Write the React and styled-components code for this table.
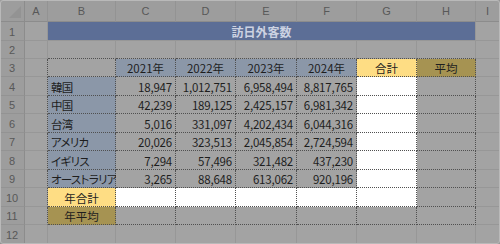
import styled, { createGlobalStyle } from 'styled-components';

const GlobalStyle = createGlobalStyle`
  html, body {
    margin: 0;
    padding: 0;
    background: #a3a3a3;
  }
  body {
    width: 500px;
    height: 244px;
    overflow: hidden;
    font-family: "Noto Sans CJK JP", "Liberation Sans", sans-serif;
    font-feature-settings: "palt";
  }
`;

const COLS = ['A', 'B', 'C', 'D', 'E', 'F', 'G', 'H', 'I'];
const ROW_H = [19, 18, 18, 19, 18, 19, 18, 19, 18, 19, 18, 19];

const FILL = {
  plain: '#a3a3a3',
  white: '#ffffff',
  title: '#5c6e96',
  head: '#8b97a8',
  yellow: '#fedd84',
  gold: '#a69352',
};

const YEARS = ['2021年', '2022年', '2023年', '2024年'];

const DATA = [
  ['韓国', '18,947', '1,012,751', '6,958,494', '8,817,765'],
  ['中国', '42,239', '189,125', '2,425,157', '6,981,342'],
  ['台湾', '5,016', '331,097', '4,202,434', '6,044,316'],
  ['アメリカ', '20,026', '323,513', '2,045,854', '2,724,594'],
  ['イギリス', '7,294', '57,496', '321,482', '437,230'],
  ['オーストラリア', '3,265', '88,648', '613,062', '920,196'],
];

const Frame = styled.div`
  position: relative;
  width: 500px;
  height: 244px;

  &::after {
    content: '';
    position: absolute;
    inset: 0;
    border: 1px solid #b9b9b9;
    border-radius: 3px;
    pointer-events: none;
  }
`;

const Sheet = styled.div`
  display: grid;
  grid-template-columns: 25px 23px 68px 60px 60px 61px 60px 60px 59px 24px;
  grid-template-rows: 22px ${ROW_H.map((h) => `${h}px`).join(' ')};
  width: 500px;
  height: 244px;
  background: ${FILL.plain};
  overflow: hidden;
`;

const Corner = styled.div`
  position: relative;
  background: #9d9d9d;
  border-right: 1px solid #8c8c8c;
  border-bottom: 1px solid #8c8c8c;
  box-sizing: border-box;

  &::after {
    content: '';
    position: absolute;
    right: 3px;
    bottom: 3px;
    width: 0;
    height: 0;
    border-left: 12px solid transparent;
    border-bottom: 12px solid #939393;
  }
`;

const ColHead = styled.div`
  display: flex;
  align-items: center;
  justify-content: center;
  padding-top: 1px;
  box-sizing: border-box;
  background: #9d9d9d;
  border-right: 1px solid #939393;
  border-bottom: 1px solid #8c8c8c;
  color: #585858;
  font-family: "Liberation Sans", sans-serif;
  font-size: 11px;
`;

const RowHead = styled.div`
  display: flex;
  align-items: center;
  justify-content: center;
  padding-top: 1px;
  box-sizing: border-box;
  background: #9d9d9d;
  border-right: 1px solid #8c8c8c;
  border-bottom: 1px solid #939393;
  color: #585858;
  font-family: "Liberation Sans", sans-serif;
  font-size: 11px;
`;

const line = (kind) =>
  kind === 'dot' ? '1px dotted #505050' : '1px solid #979797';

const Cell = styled.div`
  grid-column: span ${(p) => p.$span || 1};
  display: flex;
  align-items: center;
  justify-content: ${(p) =>
    p.$align === 'right' ? 'flex-end' : p.$align === 'center' ? 'center' : 'flex-start'};
  padding: 1px 3px 0 3px;
  box-sizing: border-box;
  min-width: 0;
  white-space: nowrap;
  background: ${(p) => FILL[p.$fill || 'plain']};
  border-right: ${(p) => line(p.$rb)};
  border-bottom: ${(p) => line(p.$bb)};
  color: ${(p) => (p.$title ? '#ccd2e2' : '#1e1e1e')};
  font-size: ${(p) => (p.$title ? '12px' : '11.5px')};
  font-weight: ${(p) => (p.$title ? 700 : 400)};
  letter-spacing: ${(p) => (p.$num ? '-0.2px' : p.$label ? '-0.7px' : '0')};
`;

const inTable = (r, c) => r >= 3 && r <= 11 && c >= 1 && c <= 7;

function cellProps(r, c) {
  // c: 0 = A ... 8 = I
  const rb = r >= 3 && r <= 11 && c <= 7 ? 'dot' : 'grid';
  const bb = r >= 2 && r <= 11 && c >= 1 && c <= 7 ? 'dot' : 'grid';
  let fill = 'plain';
  let text = '';
  let align = 'left';
  let num = false;
  let label = false;

  if (inTable(r, c)) {
    const d = r - 4;
    if (r === 3) {
      if (c >= 2 && c <= 5) {
        fill = 'head';
        text = YEARS[c - 2];
        align = 'center';
      } else if (c === 6) {
        fill = 'yellow';
        text = '合計';
        align = 'center';
      } else if (c === 7) {
        fill = 'gold';
        text = '平均';
        align = 'center';
      }
    } else if (r >= 4 && r <= 9) {
      if (c === 1) {
        fill = 'head';
        text = DATA[d][0];
        label = true;
      } else if (c >= 2 && c <= 5) {
        text = DATA[d][c - 1];
        align = 'right';
        num = true;
      } else if (c === 6) {
        fill = 'white';
      }
    } else if (r === 10) {
      if (c === 1) {
        fill = 'yellow';
        text = '年合計';
        align = 'center';
      } else if (c >= 2 && c <= 6) {
        fill = 'white';
      }
    } else if (r === 11 && c === 1) {
      fill = 'gold';
      text = '年平均';
      align = 'center';
    }
  }

  return { rb, bb, fill, text, align, num, label };
}

export default function App() {
  const rows = [];
  for (let r = 1; r <= 12; r++) {
    rows.push(<RowHead key={`h${r}`}>{r}</RowHead>);
    for (let c = 0; c < COLS.length; c++) {
      if (r === 1 && c === 1) {
        rows.push(
          <Cell key={`${r}-${c}`} $span={7} $fill="title" $align="center" $title>
            訪日外客数
          </Cell>,
        );
        continue;
      }
      if (r === 1 && c > 1 && c <= 7) continue;
      const p = cellProps(r, c);
      rows.push(
        <Cell
          key={`${r}-${c}`}
          $rb={p.rb}
          $bb={p.bb}
          $fill={p.fill}
          $align={p.align}
          $num={p.num}
          $label={p.label}>
          {p.text}
        </Cell>,
      );
    }
  }

  return (
    <>
      <GlobalStyle />
      <Frame>
        <Sheet>
          <Corner />
          {COLS.map((c) => (
            <ColHead key={c}>{c}</ColHead>
          ))}
          {rows}
        </Sheet>
      </Frame>
    </>
  );
}
